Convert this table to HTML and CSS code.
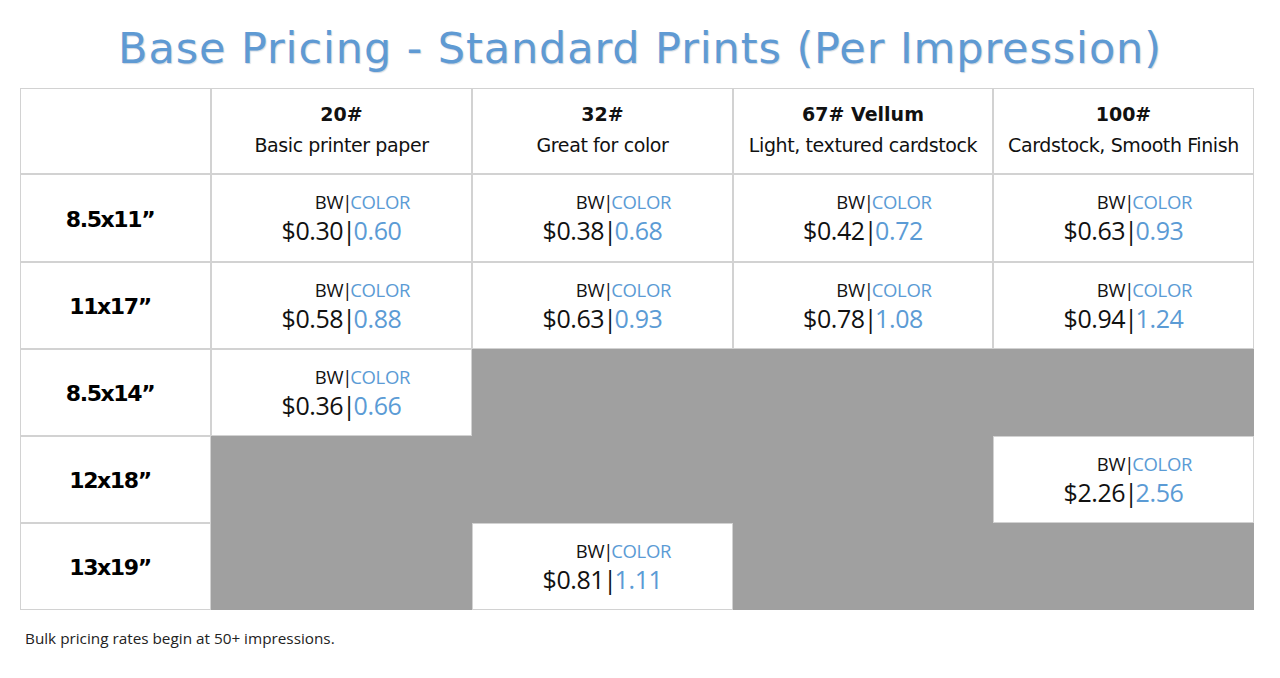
FILE: index.html
```html
<!DOCTYPE html>
<html lang="en">
<head>
<meta charset="utf-8">
<title>Base Pricing - Standard Prints</title>
<link rel="stylesheet" href="styles.css">
</head>
<body>
<main class="page">
  <h1 class="title">Base Pricing - Standard Prints (Per Impression)</h1>
  <div class="grid">
    <div class="cell head"></div>
    <div class="cell head"><div class="h-name">20#</div><div class="h-desc">Basic printer paper</div></div>
    <div class="cell head"><div class="h-name">32#</div><div class="h-desc">Great for color</div></div>
    <div class="cell head"><div class="h-name">67# Vellum</div><div class="h-desc">Light, textured cardstock</div></div>
    <div class="cell head"><div class="h-name">100#</div><div class="h-desc">Cardstock, Smooth Finish</div></div>

    <div class="cell size">8.5x11”</div>
    <div class="cell price"><div class="lbl">BW<span class="bar">|</span><span class="c">COLOR</span></div><div class="amt">$0.30<span class="bar">|</span><span class="c">0.60</span></div></div>
    <div class="cell price"><div class="lbl">BW<span class="bar">|</span><span class="c">COLOR</span></div><div class="amt">$0.38<span class="bar">|</span><span class="c">0.68</span></div></div>
    <div class="cell price"><div class="lbl">BW<span class="bar">|</span><span class="c">COLOR</span></div><div class="amt">$0.42<span class="bar">|</span><span class="c">0.72</span></div></div>
    <div class="cell price"><div class="lbl">BW<span class="bar">|</span><span class="c">COLOR</span></div><div class="amt">$0.63<span class="bar">|</span><span class="c">0.93</span></div></div>

    <div class="cell size">11x17”</div>
    <div class="cell price"><div class="lbl">BW<span class="bar">|</span><span class="c">COLOR</span></div><div class="amt">$0.58<span class="bar">|</span><span class="c">0.88</span></div></div>
    <div class="cell price"><div class="lbl">BW<span class="bar">|</span><span class="c">COLOR</span></div><div class="amt">$0.63<span class="bar">|</span><span class="c">0.93</span></div></div>
    <div class="cell price"><div class="lbl">BW<span class="bar">|</span><span class="c">COLOR</span></div><div class="amt">$0.78<span class="bar">|</span><span class="c">1.08</span></div></div>
    <div class="cell price"><div class="lbl">BW<span class="bar">|</span><span class="c">COLOR</span></div><div class="amt">$0.94<span class="bar">|</span><span class="c">1.24</span></div></div>

    <div class="cell size">8.5x14”</div>
    <div class="cell price"><div class="lbl">BW<span class="bar">|</span><span class="c">COLOR</span></div><div class="amt">$0.36<span class="bar">|</span><span class="c">0.66</span></div></div>
    <div class="cell na"></div>
    <div class="cell na"></div>
    <div class="cell na"></div>

    <div class="cell size">12x18”</div>
    <div class="cell na"></div>
    <div class="cell na"></div>
    <div class="cell na"></div>
    <div class="cell price"><div class="lbl">BW<span class="bar">|</span><span class="c">COLOR</span></div><div class="amt">$2.26<span class="bar">|</span><span class="c">2.56</span></div></div>

    <div class="cell size">13x19”</div>
    <div class="cell na"></div>
    <div class="cell price"><div class="lbl">BW<span class="bar">|</span><span class="c">COLOR</span></div><div class="amt">$0.81<span class="bar">|</span><span class="c">1.11</span></div></div>
    <div class="cell na"></div>
    <div class="cell na"></div>
  </div>
  <p class="note">Bulk pricing rates begin at 50+ impressions.</p>
</main>
</body>
</html>
```

FILE: styles.css
```css
html, body {
  margin: 0;
  padding: 0;
  background: #ffffff;
}

.page {
  padding: 0 0 0 20px;
  width: 1235px;
}

.title {
  margin: 0 0 0 -20px;
  width: 1280px;
  height: 88px;
  box-sizing: border-box;
  padding-top: 18px;
  text-align: center;
  font-family: "DejaVu Sans", Verdana, sans-serif;
  font-weight: normal;
  font-size: 43px;
  line-height: 60px;
  letter-spacing: 0.9px;
  color: #5f9ad3;
  text-shadow: 1px 1px 1px rgba(120, 140, 170, 0.35);
  white-space: nowrap;
}

.grid {
  display: grid;
  grid-template-columns: 191px 261px 261px 260px 261px;
  grid-template-rows: 86px 88px 87px 87px 87px 87px;
}

.cell {
  box-sizing: border-box;
  border: 1px solid #d2d2d2;
  display: flex;
  flex-direction: column;
  align-items: center;
  justify-content: center;
  background: #ffffff;
}

.head {
  font-family: "DejaVu Sans", Verdana, sans-serif;
  color: #111;
  padding-bottom: 3px;
}

.h-name {
  font-weight: bold;
  font-size: 19px;
  line-height: 30px;
}

.h-desc {
  font-size: 19px;
  line-height: 32px;
  letter-spacing: -0.4px;
}

.size {
  font-family: "DejaVu Sans", Verdana, sans-serif;
  font-weight: bold;
  font-size: 22px;
  letter-spacing: -1.4px;
  color: #000;
  padding-top: 2px;
  padding-right: 11px;
}

.price {
  font-family: "Open Sans", "Noto Sans", sans-serif;
  color: #111;
}

.lbl {
  font-size: 18.5px;
  line-height: 24px;
  padding-left: 42px;
  letter-spacing: -0.3px;
}

.amt {
  font-size: 25px;
  line-height: 32px;
  letter-spacing: -0.4px;
}

.bar {
  margin: 0 -2px 0 -1px;
  color: #111;
}

.c {
  color: #5b9bd5;
}

.na {
  background: #a0a0a0;
  border-color: #a0a0a0;
}

.note {
  margin: 18px 0 0 5px;
  font-family: "Open Sans", "Noto Sans", sans-serif;
  font-size: 15.3px;
  color: #222;
}
```
